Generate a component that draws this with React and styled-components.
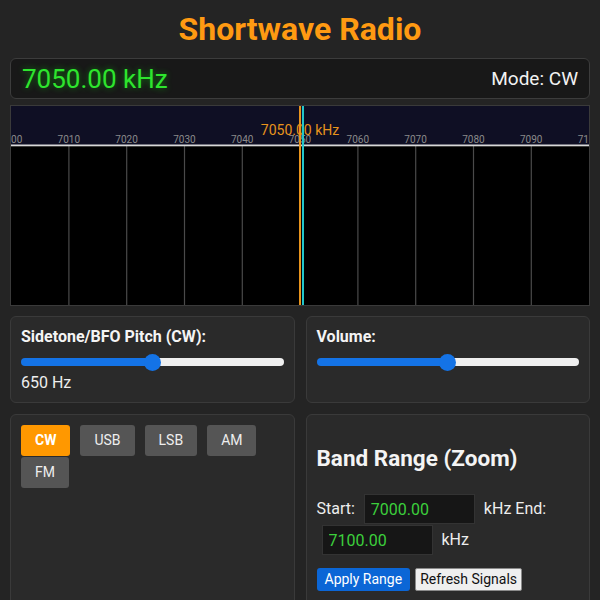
import React from "react";
import styled, { createGlobalStyle } from "styled-components";

const Global = createGlobalStyle`
  html, body { margin: 0; padding: 0; background: #242424; }
  body { font-family: Roboto, "Liberation Sans", sans-serif; color: #eee; }
  * { box-sizing: border-box; }
`;

const Page = styled.div`
  padding: 10px;
  width: 600px;
`;

const Title = styled.h1`
  margin: 0 0 10px;
  font-size: 32px;
  line-height: 38px;
  font-weight: 700;
  text-align: center;
  color: #ff9a12;
`;

const Display = styled.div`
  height: 41px;
  display: flex;
  align-items: center;
  justify-content: space-between;
  padding: 0 11px;
  background: #181818;
  border: 1px solid #3c3c3c;
  border-radius: 6px;
  margin-bottom: 6px;
`;

const Freq = styled.span`
  font-size: 26px;
  color: #2ee52e;
  text-shadow: 0 0 6px rgba(0, 255, 0, 0.45);
`;

const ModeText = styled.span`
  font-size: 19px;
  color: #f2f2f2;
`;

const Spectrum = styled.div`
  border: 1px solid #3a3a3a;
  height: 201px;
  background: #000;
  svg { display: block; }
`;

const Grid = styled.div`
  margin-top: 10px;
  display: grid;
  grid-template-columns: 1fr 1fr;
  gap: 11px 11px;
`;

const Panel = styled.div`
  background: #2a2a2a;
  border: 1px solid #3a3a3a;
  border-radius: 6px;
  padding: 10px;
  min-height: ${(p) => p.$min || 0}px;
`;

const Label = styled.div`
  font-size: 16px;
  font-weight: 700;
  line-height: 19px;
  color: #f4f4f4;
`;

const ValueText = styled.div`
  font-size: 16px;
  line-height: 19px;
  color: #eee;
`;

const Range = styled.input`
  -webkit-appearance: none;
  appearance: none;
  display: block;
  width: 100%;
  height: 8px;
  margin: 12px 0 7px;
  border-radius: 4px;
  outline: none;
  &::-webkit-slider-thumb {
    -webkit-appearance: none;
    width: 17px;
    height: 17px;
    border-radius: 50%;
    background: #1473e6;
    border: none;
  }
`;

const ModeRow = styled.div`
  display: flex;
  flex-wrap: wrap;
  gap: 1px 10px;
`;

const ModeButton = styled.button`
  font-family: Roboto, "Liberation Sans", sans-serif;
  font-size: 14px;
  line-height: 17px;
  padding: 7px 14px;
  border: none;
  border-radius: 3px;
  background: ${(p) => (p.$active ? "#ff9800" : "#555")};
  color: ${(p) => (p.$active ? "#fff" : "#eee")};
  font-weight: ${(p) => (p.$active ? 700 : 400)};
`;

const Heading = styled.h2`
  margin: 20px 0 22px;
  font-size: 22.5px;
  line-height: 27px;
  font-weight: 700;
  color: #f4f4f4;
`;

const RangeLine = styled.div`
  display: flex;
  flex-wrap: wrap;
  align-items: center;
  row-gap: 1px;
  font-size: 16px;
  color: #eee;
`;

const RangeText = styled.span`
  margin-left: ${(p) => (p.$first ? 0 : 4)}px;
  margin-right: 4px;
  line-height: 30px;
`;

const FreqInput = styled.input`
  width: 111px;
  height: 30px;
  margin: 0 5px;
  padding: 0 6px;
  background: #161616;
  border: 1px solid #333;
  color: #3ccf3c;
  font-family: Roboto, "Liberation Sans", sans-serif;
  font-size: 16px;
`;

const ButtonRow = styled.div`
  display: flex;
  gap: 5px;
  margin-top: 13px;
`;

const ActionButton = styled.button`
  font-family: Roboto, "Liberation Sans", sans-serif;
  font-size: 14px;
  line-height: 17px;
  height: 23px;
  padding: 0 ${(p) => (p.$primary ? 8 : 4)}px;
  border-radius: ${(p) => (p.$primary ? 3 : 2)}px;
  border: ${(p) => (p.$primary ? "none" : "1px solid #8a8a8a")};
  background: ${(p) => (p.$primary ? "#0b66d6" : "#efefef")};
  color: ${(p) => (p.$primary ? "#fff" : "#111")};
`;

function Slider({ value }) {
  const pct = value;
  return (
    <Range
      type="range"
      min="0"
      max="100"
      defaultValue={value}
      style={{
        background: `linear-gradient(to right, #1473e6 0%, #1473e6 ${pct}%, #efefef ${pct}%, #efefef 100%)`,
      }}
    />
  );
}

function SpectrumView() {
  const W = 578;
  const H = 199;
  const step = W / 10;
  const ticks = Array.from({ length: 11 }, (_, i) => i);
  return (
    <svg width={W} height={H} viewBox={`0 0 ${W} ${H}`}>
      <rect x="0" y="0" width={W} height="39" fill="#0f0f24" />
      <rect x="0" y="39" width={W} height={H - 39} fill="#000" />
      {ticks.slice(1, 10).map((i) => (
        <rect key={"g" + i} x={i * step - 0.5} y="40" width="1.2" height={H - 40} fill="#4a4a4a" />
      ))}
      <rect x="0" y="38.5" width={W} height="1.8" fill="#d8d8d8" />
      {ticks.map((i) => (
        <text
          key={"t" + i}
          x={i * step}
          y="37"
          fontSize="10"
          fill="#8a8a8a"
          textAnchor="middle"
          fontFamily="Roboto, 'Liberation Sans', sans-serif"
        >
          {7000 + i * 10}
        </text>
      ))}
      <text
        x="289"
        y="29"
        fontSize="14"
        fill="#e8931c"
        textAnchor="middle"
        fontFamily="Roboto, 'Liberation Sans', sans-serif"
      >
        7050.00 kHz
      </text>
      <rect x="288" y="0" width="2" height={H} fill="#e8931c" />
      <rect x="291" y="0" width="2" height={H} fill="#22c6c8" />
    </svg>
  );
}

export default function App() {
  const modes = ["CW", "USB", "LSB", "AM", "FM"];
  return (
    <>
      <Global />
      <Page>
        <Title>Shortwave Radio</Title>
        <Display>
          <Freq>7050.00 kHz</Freq>
          <ModeText>Mode: CW</ModeText>
        </Display>
        <Spectrum>
          <SpectrumView />
        </Spectrum>
        <Grid>
          <Panel>
            <Label>Sidetone/BFO Pitch (CW):</Label>
            <Slider value={50} />
            <ValueText>650 Hz</ValueText>
          </Panel>
          <Panel>
            <Label>Volume:</Label>
            <Slider value={50} />
          </Panel>
          <Panel $min={200}>
            <ModeRow>
              {modes.map((m) => (
                <ModeButton key={m} $active={m === "CW"}>
                  {m}
                </ModeButton>
              ))}
            </ModeRow>
          </Panel>
          <Panel $min={200}>
            <Heading>Band Range (Zoom)</Heading>
            <RangeLine>
              <RangeText $first>Start:</RangeText>
              <FreqInput defaultValue="7000.00" />
              <RangeText>kHz End:</RangeText>
              <FreqInput defaultValue="7100.00" />
              <RangeText>kHz</RangeText>
            </RangeLine>
            <ButtonRow>
              <ActionButton $primary>Apply Range</ActionButton>
              <ActionButton>Refresh Signals</ActionButton>
            </ButtonRow>
          </Panel>
        </Grid>
      </Page>
    </>
  );
}
